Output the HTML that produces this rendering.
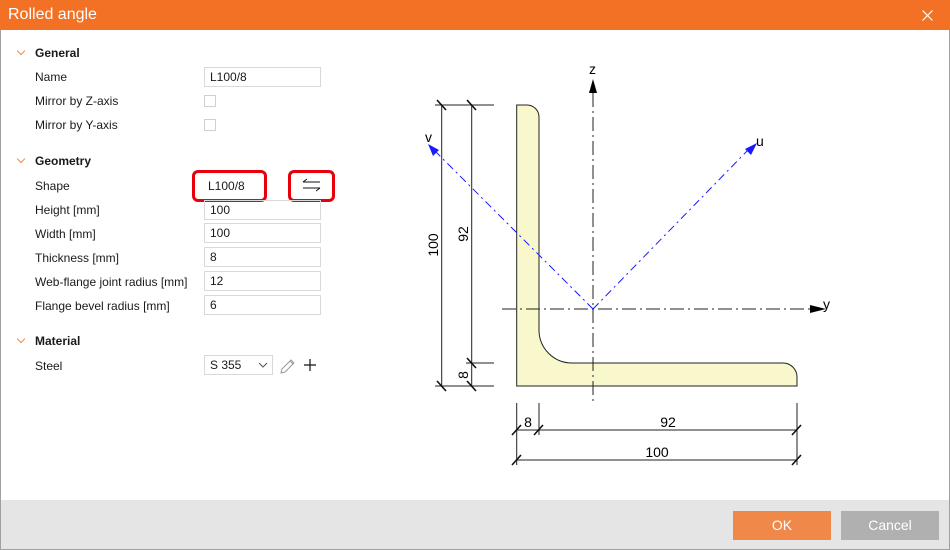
<!DOCTYPE html>
<html><head><meta charset="utf-8"><style>
*{margin:0;padding:0;box-sizing:border-box}
body{width:950px;height:550px;position:relative;background:#fff;font-family:"Liberation Sans",sans-serif;font-size:12px;color:#1a1a1a;overflow:hidden}
.title{position:absolute;left:0;top:0;width:950px;height:30px;background:#f37124;color:#fff;font-size:16px;line-height:30px;padding-left:8px}
.frame{position:absolute;left:0;top:30px;width:950px;height:520px;border:1px solid #a0a0a0;border-top:none}
.foot{position:absolute;left:1px;top:500px;width:948px;height:49px;background:#e5e5e5}
.btn{position:absolute;top:511px;height:29px;color:#fff;font-size:14px;text-align:center;line-height:29px}
.l{position:absolute;left:35px;line-height:14px}
.h{position:absolute;left:35px;font-weight:bold;line-height:14px}
.chev{position:absolute;left:18px;width:6px;height:6px;border-right:1.3px solid #f0884a;border-bottom:1.3px solid #f0884a;transform:rotate(45deg)}
.in{position:absolute;left:204px;width:117px;height:20px;border:1px solid #d9d9d9;padding-left:5px;line-height:18px}
.cb{position:absolute;left:204px;width:12px;height:12px;border:1px solid #d0d0d0}
.red{position:absolute;border:3px solid #e8000b;border-radius:6px}
</style></head><body>
<div class="title">Rolled angle</div>
<svg style="position:absolute;left:922px;top:10px" width="11" height="11"><path d="M0.5 0.5L10.5 10.5M10.5 0.5L0.5 10.5" stroke="#fff" stroke-width="1.2"/></svg>
<div class="frame"></div>

<div class="chev" style="top:48px"></div><div class="h" style="top:46px">General</div>
<div class="l" style="top:70px">Name</div><div class="in" style="top:67px">L100/8</div>
<div class="l" style="top:94px">Mirror by Z-axis</div><div class="cb" style="top:95px"></div>
<div class="l" style="top:118px">Mirror by Y-axis</div><div class="cb" style="top:119px"></div>

<div class="chev" style="top:156px"></div><div class="h" style="top:154px">Geometry</div>
<div class="l" style="top:179px">Shape</div>
<div class="red" style="left:192px;top:170px;width:75px;height:32px"></div>
<div style="position:absolute;left:208px;top:179px;line-height:14px">L100/8</div>
<div class="red" style="left:288px;top:170px;width:47px;height:32px"></div>
<svg style="position:absolute;left:302px;top:178px" width="20" height="14"><path d="M1 4H18M1 4L5 1M1 10H18M18 10L14 13" stroke="#111" stroke-width="1" fill="none"/></svg>
<div class="l" style="top:203px">Height [mm]</div><div class="in" style="top:200px;left:204px">100</div>
<div class="l" style="top:227px">Width [mm]</div><div class="in" style="top:223px">100</div>
<div class="l" style="top:251px">Thickness [mm]</div><div class="in" style="top:247px">8</div>
<div class="l" style="top:275px">Web-flange joint radius [mm]</div><div class="in" style="top:271px">12</div>
<div class="l" style="top:299px">Flange bevel radius [mm]</div><div class="in" style="top:295px">6</div>

<div class="chev" style="top:336px"></div><div class="h" style="top:334px">Material</div>
<div class="l" style="top:359px">Steel</div>
<div class="in" style="top:355px;width:69px">S 355</div>
<svg style="position:absolute;left:258px;top:362px" width="10" height="7"><path d="M1 1L5 5L9 1" stroke="#555" fill="none"/></svg>
<svg style="position:absolute;left:279px;top:357px" width="18" height="18"><path d="M2 16L3 12L12 3L15 6L6 15Z M11 4L14 7" stroke="#999" fill="none"/></svg>
<svg style="position:absolute;left:303px;top:358px" width="14" height="14"><path d="M7 1V13M1 7H13" stroke="#111" stroke-width="1.2"/></svg>

<svg style="position:absolute;left:0;top:0" width="950" height="500" font-family="Liberation Sans, sans-serif" font-size="14">
<path d="M516.7 105H527A12 12 0 0 1 539 117V330A33 33 0 0 0 572 363H783A14 14 0 0 1 797 377V386H516.7Z" fill="#f8f8cc" stroke="#222" stroke-width="1"/>
<g stroke="#222" stroke-width="1" stroke-dasharray="14,4,2,4" fill="none">
<path d="M593 93V402"/><path d="M502 309H812"/>
</g>
<g stroke="#1a1aff" stroke-width="1" stroke-dasharray="8,4,2,4" fill="none">
<path d="M593 309L748 150"/><path d="M593 309L436 152"/>
</g>
<path d="M593 79L589 93H597Z" fill="#000"/>
<path d="M826 309L810 305V313Z" fill="#000"/>
<path d="M757 143L745 149L751 155Z" fill="#1a1aff"/>
<path d="M428 144L433 156L439 150Z" fill="#1a1aff"/>
<text x="589" y="74">z</text><text x="823" y="309">y</text>
<text x="756" y="146">u</text><text x="425" y="142">v</text>
<g stroke="#222" stroke-width="1" fill="none">
<path d="M435 105H494M466 363H494M435 386H494"/>
<path d="M441.7 105V386M471.7 105V386"/>
<path d="M516.7 403V465M539 403V435M797 403V465"/>
<path d="M516.7 430H797M516.7 460H797"/>
</g>
<g stroke="#111" stroke-width="1.6" fill="none">
<path d="M437 100L446 110M467 100L476 110M467 358L476 368M437 381L446 391M467 381L476 391"/>
<path d="M512 435L521 425M534 435L543 425M792 435L801 425M512 465L521 455M792 465L801 455"/>
</g>
<text transform="translate(438,245) rotate(-90)" text-anchor="middle">100</text>
<text transform="translate(468,234) rotate(-90)" text-anchor="middle">92</text>
<text transform="translate(468,375) rotate(-90)" text-anchor="middle">8</text>
<text x="528" y="427" text-anchor="middle">8</text>
<text x="668" y="427" text-anchor="middle">92</text>
<text x="657" y="457" text-anchor="middle">100</text>
</svg>

<div class="foot"></div>
<div class="btn" style="left:733px;width:98px;background:#f0884a">OK</div>
<div class="btn" style="left:841px;width:98px;background:#b0b0b0">Cancel</div>
</body></html>
